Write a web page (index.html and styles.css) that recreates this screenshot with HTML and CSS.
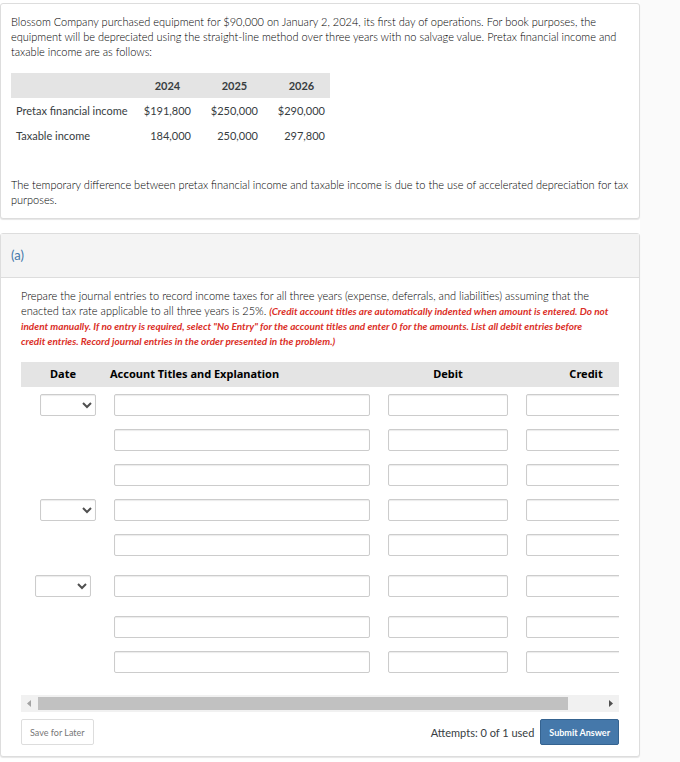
FILE: index.html
```
<!DOCTYPE html>
<html lang="en">
<head>
  <meta charset="UTF-8">
  <meta name="viewport" content="width=device-width, initial-scale=1.0">
  <title>Blossom Company - Income Taxes</title>
  <link rel="stylesheet" href="styles.css">
</head>
<body>
  <main class="content">
    <section class="panel question">
      <p>Blossom Company purchased equipment for $90,000 on January 2, 2024, its first day of operations. For book purposes, the equipment will be depreciated using the straight-line method over three years with no salvage value. Pretax financial income and taxable income are as follows:</p>
      <table class="data-table">
        <thead>
          <tr>
            <td></td>
            <th scope="col">2024</th>
            <th scope="col">2025</th>
            <th scope="col">2026</th>
          </tr>
        </thead>
        <tbody>
          <tr>
            <th scope="row">Pretax financial income</th>
            <td>$191,800</td>
            <td>$250,000</td>
            <td>$290,000</td>
          </tr>
          <tr>
            <th scope="row">Taxable income</th>
            <td>184,000</td>
            <td>250,000</td>
            <td>297,800</td>
          </tr>
        </tbody>
      </table>
      <p>The temporary difference between pretax financial income and taxable income is due to the use of accelerated depreciation for tax purposes.</p>
    </section>

    <section class="panel part">
      <h2 class="part-title">(a)</h2>
      <div class="part-body">
        <p>Prepare the journal entries to record income taxes for all three years (expense, deferrals, and liabilities) assuming that the<br>enacted tax rate applicable to all three years is 25%. <em class="note">(Credit account titles are automatically indented when amount is entered. Do not<br>indent manually. If no entry is required, select "No Entry" for the account titles and enter 0 for the amounts. List all debit entries before<br>credit entries. Record journal entries in the order presented in the problem.)</em></p>

        <div class="journal-wrap">
          <table class="journal">
            <colgroup>
              <col class="col-date">
              <col class="col-account">
              <col class="col-amount">
              <col class="col-amount">
            </colgroup>
            <thead>
              <tr>
                <th scope="col">Date</th>
                <th scope="col" class="account-head">Account Titles and Explanation</th>
                <th scope="col">Debit</th>
                <th scope="col">Credit</th>
              </tr>
            </thead>
            <tbody>
              <tr>
                <td class="date indented"><select aria-label="Date, first entry"><option></option><option>2024</option><option>2025</option><option>2026</option></select></td>
                <td><input type="text" aria-label="Account title 1"></td>
                <td><input type="text" aria-label="Debit 1"></td>
                <td><input type="text" aria-label="Credit 1"></td>
              </tr>
              <tr>
                <td></td>
                <td><input type="text" aria-label="Account title 2"></td>
                <td><input type="text" aria-label="Debit 2"></td>
                <td><input type="text" aria-label="Credit 2"></td>
              </tr>
              <tr>
                <td></td>
                <td><input type="text" aria-label="Account title 3"></td>
                <td><input type="text" aria-label="Debit 3"></td>
                <td><input type="text" aria-label="Credit 3"></td>
              </tr>
              <tr>
                <td class="date indented"><select aria-label="Date, second entry"><option></option><option>2024</option><option>2025</option><option>2026</option></select></td>
                <td><input type="text" aria-label="Account title 4"></td>
                <td><input type="text" aria-label="Debit 4"></td>
                <td><input type="text" aria-label="Credit 4"></td>
              </tr>
              <tr>
                <td></td>
                <td><input type="text" aria-label="Account title 5"></td>
                <td><input type="text" aria-label="Debit 5"></td>
                <td><input type="text" aria-label="Credit 5"></td>
              </tr>
              <tr class="tall">
                <td class="date"><select aria-label="Date, third entry"><option></option><option>2024</option><option>2025</option><option>2026</option></select></td>
                <td><input type="text" aria-label="Account title 6"></td>
                <td><input type="text" aria-label="Debit 6"></td>
                <td><input type="text" aria-label="Credit 6"></td>
              </tr>
              <tr>
                <td></td>
                <td><input type="text" aria-label="Account title 7"></td>
                <td><input type="text" aria-label="Debit 7"></td>
                <td><input type="text" aria-label="Credit 7"></td>
              </tr>
              <tr>
                <td></td>
                <td><input type="text" aria-label="Account title 8"></td>
                <td><input type="text" aria-label="Debit 8"></td>
                <td><input type="text" aria-label="Credit 8"></td>
              </tr>
            </tbody>
          </table>
        </div>
        <div class="scrollbar">
          <button type="button" class="arrow" aria-label="Scroll left"><svg width="17" height="17" viewBox="0 0 17 17"><path d="M10 5v7L6 8.5z" fill="#a3a3a3"/></svg></button>
          <div class="track"><div class="thumb"></div></div>
          <button type="button" class="arrow" aria-label="Scroll right"><svg width="17" height="17" viewBox="0 0 17 17"><path d="M7 5v7L11 8.5z" fill="#505050"/></svg></button>
        </div>

        <div class="actions">
          <button type="button" class="btn save">Save for Later</button>
          <span class="attempts">Attempts: 0 of 1 used</span>
          <button type="button" class="btn submit">Submit Answer</button>
        </div>
      </div>
    </section>
  </main>
</body>
</html>
```

FILE: styles.css
```
* {
  box-sizing: border-box;
}

body {
  margin: 0;
  background-color: #fafafa;
  color: #373d3f;
  font-family: Lato, "Liberation Sans", sans-serif;
  font-size: 11px;
  line-height: 15px;
}

p {
  margin: 0;
}

.content {
  margin-right: 40px;
  min-height: 100vh;
  padding-top: 3px;
  background-color: #fff;
}

.panel {
  border: 1px solid #ddd;
  border-radius: 3px;
  background-color: #fff;
  box-shadow: 0 1px 1px rgba(0, 0, 0, 0.1);
}

.question {
  padding: 10px 10px 11px;
  margin-bottom: 14px;
}

.question p,
.part-body p {
  font-weight: 300;
  color: #000;
}

/* income data */
.data-table {
  margin: 14px 0 29px;
  border-collapse: collapse;
}

.data-table thead {
  background-color: #e4e4e4;
}

.data-table th,
.data-table td {
  height: 25px;
  min-width: 67px;
  padding: 0 5px;
  text-align: right;
  font-weight: normal;
}

.data-table thead th {
  text-align: center;
  padding-left: 15px;
  font-weight: bold;
}

.data-table tbody th {
  width: 118px;
  padding-right: 0;
  text-align: left;
  white-space: nowrap;
}

/* part (a) */
.part-title {
  margin: 0;
  padding: 14px 10px;
  border-bottom: 1px solid #ddd;
  background-color: #f4f4f4;
  color: #4578aa;
  font-size: 13px;
  font-weight: normal;
}

.part-body {
  padding: 10px 20px 11px;
}

.part-body .note {
  color: #db2f27;
  font-size: 10px;
  font-weight: bold;
  line-height: 12px;
}

.journal-wrap {
  overflow: hidden;
  margin-top: 14px;
}

.journal {
  width: 634px;
  table-layout: fixed;
  border-collapse: collapse;
}

.col-date {
  width: 84px;
}

.col-account {
  width: 274px;
}

.col-amount {
  width: 138px;
}

.journal th {
  height: 25px;
  padding: 0 0 2px;
  background-color: #e4e4e4;
  color: #000;
  font-family: "Noto Sans", "Open Sans", sans-serif;
  font-weight: bold;
}

.journal .account-head {
  padding-left: 5px;
  text-align: left;
}

.journal td {
  height: 35px;
  padding: 0 9px;
}

.journal .tall td {
  height: 47px;
}

.journal .date {
  padding: 0;
  text-align: center;
}

.journal .indented {
  padding-left: 10px;
}

.journal input,
.journal select {
  display: block;
  width: 100%;
  height: 22px;
  border: 1px solid #ccc;
  border-radius: 2px;
  background-color: #fff;
  box-shadow: inset 0 1px 1px rgba(0, 0, 0, 0.08);
  font: inherit;
}

.journal select {
  width: 56px;
  margin: 0 auto;
  color: #505050;
}

/* horizontal scroll strip under the journal */
.scrollbar {
  display: flex;
  height: 17px;
  margin-top: 16px;
  background-color: #f1f1f1;
}

.arrow {
  width: 17px;
  padding: 0;
  border: none;
  background: none;
}

.arrow svg {
  display: block;
}

.track {
  flex: 1;
  padding: 2px 0;
}

.thumb {
  width: 94%;
  height: 13px;
  background-color: #c1c1c1;
}

.actions {
  display: flex;
  align-items: center;
  margin-top: 7px;
}

.btn {
  height: 26px;
  padding: 0 8px;
  border: 1px solid #ddd;
  border-radius: 2px;
  background-color: #fff;
  color: #777;
  font-family: inherit;
  font-size: 9px;
  cursor: pointer;
}

.attempts {
  margin-left: auto;
  margin-right: 6px;
}

.submit {
  border-color: #356390;
  background-color: #4578aa;
  color: #fff;
  font-weight: bold;
}
```
